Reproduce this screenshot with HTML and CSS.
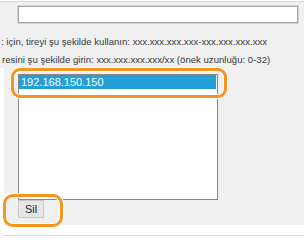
FILE: index.html
```html
<!DOCTYPE html>
<html>
<head>
<meta charset="utf-8">
<link rel="stylesheet" href="styles.css">
</head>
<body>
<div class="page">
  <div class="top">
    <input class="field" type="text">
  </div>
  <div class="note n1">: için, tireyi şu şekilde kullanın: xxx.xxx.xxx.xxx-xxx.xxx.xxx.xxx</div>
  <div class="note n2">resini şu şekilde girin: xxx.xxx.xxx.xxx/xx (önek uzunluğu: 0-32)</div>
  <div class="lower">
    <div class="listbox">
      <div class="item sel">192.168.150.150</div>
    </div>
    <button class="btn">Sil</button>
    <div class="ring ring-item"></div>
    <div class="ring ring-btn"></div>
  </div>
  <div class="rule"></div>
</div>
</body>
</html>
```
FILE: styles.css
```css
html, body { margin: 0; padding: 0; background: #fff; }
body { font-family: "Liberation Sans", Arial, sans-serif; width: 304px; height: 245px; overflow: hidden; }
.page { padding-top: 1px; }
.top {
  border-top: 1px solid #d9d9d9;
  background: #f0f0f0;
  padding: 4px 0 0 18px;
  height: 30px;
  box-sizing: border-box;
}
.field {
  display: block;
  box-sizing: border-box;
  width: 280px;
  height: 17px;
  margin: 0;
  padding: 0;
  background: #fff;
  border: 1px solid #a3a3a3;
  box-shadow: 0 0 0 1px #d6d6d6;
}
.note {
  background: #f0f0f0;
  color: #3a3a3a;
  font-size: 9.6px;
  white-space: nowrap;
  padding-left: 1px;
}
.n1 { padding-top: 1px; height: 20px; line-height: 20px; }
.n2 { height: 16px; line-height: 16px; padding-left: 2px; }
.lower {
  position: relative;
  margin-left: 4px;
  background: #f0f0f0;
  padding: 6px 0 0 14px;
  height: 157px;
  box-sizing: border-box;
}
.listbox {
  box-sizing: border-box;
  width: 200px;
  height: 126px;
  background: #fff;
  border: 1px solid #888;
  padding: 0;
}
.item {
  font-size: 11px;
  line-height: 14px;
  height: 14px;
  padding-left: 2px;
  color: #fff;
  white-space: nowrap;
}
.sel { background: #239ed9; margin-right: 1px; }
.btn {
  display: block;
  box-sizing: border-box;
  width: 26px;
  height: 18px;
  margin: 0;
  padding: 0;
  font-family: "Liberation Sans", Arial, sans-serif;
  font-size: 11px;
  color: #222;
  background: #e6e6e6;
  border: 1px solid #c8c8c8;
  border-radius: 0;
}
.ring {
  position: absolute;
  box-sizing: border-box;
  border: 3px solid #f7941d;
  border-radius: 9px;
  box-shadow: 0 0 0 1px #fff, inset 0 0 0 1px #fff;
}
.ring-item { left: 7px; top: 0; width: 216px; height: 30px; }
.ring-btn { left: -1px; top: 126px; width: 60px; height: 33px; border-radius: 10px; }
.rule {
  margin: 10px 0 0 3px;
  height: 1px;
  background: #dcdcdc;
}
```
